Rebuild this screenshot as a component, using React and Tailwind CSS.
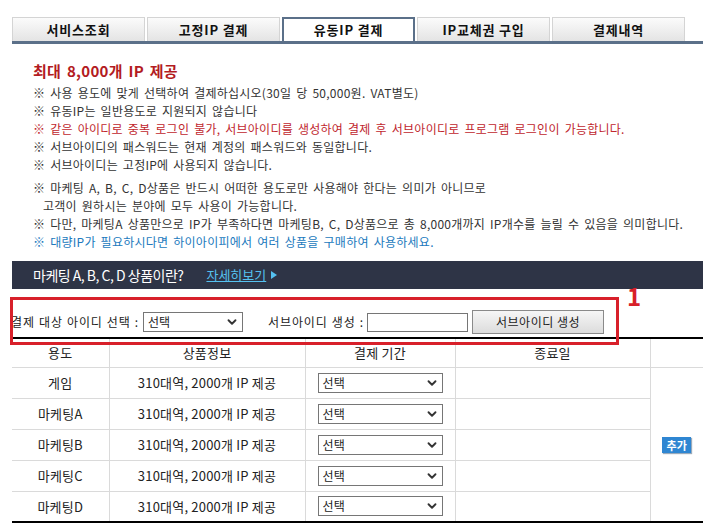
import { ChevronDown } from "lucide-react";

const tabs = ["서비스조회", "고정IP 결제", "유동IP 결제", "IP교체권 구입", "결제내역"];

const rows = ["게임", "마케팅A", "마케팅B", "마케팅C", "마케팅D"];

// Fake select box (native selects render differently per browser)
const SelectBox = ({ width }) => (
  <div
    className={`flex h-[20px] items-center justify-between border border-[#767676] bg-white pl-[4px] pr-[3px] text-[12px] text-[#222] ${width}`}
  >
    <span>선택</span>
    <ChevronDown size={14} strokeWidth={3.2} className="text-[#333]" />
  </div>
);

const Notice = ({ children, color = "text-[#333]", indent = false }) => (
  <p className={`h-[18px] leading-[18px] ${color} ${indent ? "pl-[10px]" : ""}`}>{children}</p>
);

export default function App() {
  return (
    <div className="relative h-[530px] w-[703px] overflow-hidden bg-white font-['Noto_Sans_CJK_KR',sans-serif] text-[12px] text-[#333]">
      {/* top tabs */}
      <div className="pl-[12px] pt-[17px]">
        <div className="flex gap-[2px] border-b-[3px] border-[#5b7089]">
          {tabs.map((tab, i) =>
            i === 2 ? (
              <div
                key={tab}
                className="flex h-[24px] w-[133px] items-center justify-center border-x-2 border-t-2 border-[#5b7089] bg-white text-[13px] font-bold tracking-[0.8px] text-[#111]"
              >
                {tab}
              </div>
            ) : (
              <div
                key={tab}
                className="flex h-[24px] w-[133px] items-center justify-center border border-b-0 border-[#d4d4d4] bg-gradient-to-b from-[#fbfbfb] to-[#e4e4e4] text-[13px] font-bold tracking-[0.8px] text-[#111]"
              >
                {tab}
              </div>
            )
          )}
        </div>
      </div>

      {/* notices */}
      <div className="pl-[33px] pt-[17px] tracking-[0.25px] [word-spacing:2px]">
        <h2 className="h-[20px] text-[15px] font-bold leading-[20px] tracking-[0.3px] text-[#b31b22]">최대 8,000개 IP 제공</h2>
        <div className="mt-[3px]">
          <Notice>※ 사용 용도에 맞게 선택하여 결제하십시오(30일 당 50,000원. VAT별도)</Notice>
          <Notice>※ 유동IP는 일반용도로 지원되지 않습니다</Notice>
          <Notice color="text-[#c0262d]">
            ※ 같은 아이디로 중복 로그인 불가, 서브아이디를 생성하여 결제 후 서브아이디로 프로그램 로그인이 가능합니다.
          </Notice>
          <Notice>※ 서브아이디의 패스워드는 현재 계정의 패스워드와 동일합니다.</Notice>
          <Notice>※ 서브아이디는 고정IP에 사용되지 않습니다.</Notice>
        </div>
        <div className="mt-[5px]">
          <Notice>※ 마케팅 A, B, C, D상품은 반드시 어떠한 용도로만 사용해야 한다는 의미가 아니므로</Notice>
          <Notice indent>고객이 원하시는 분야에 모두 사용이 가능합니다.</Notice>
          <Notice>
            ※ 다만, 마케팅A 상품만으로 IP가 부족하다면 마케팅B, C, D상품으로 총 8,000개까지 IP개수를 늘릴 수 있음을 의미합니다.
          </Notice>
          <Notice color="text-[#2179bd]">※ 대량IP가 필요하시다면 하이아이피에서 여러 상품을 구매하여 사용하세요.</Notice>
        </div>
      </div>

      {/* banner */}
      <div className="ml-[12px] mt-[10px] flex h-[28px] items-center bg-[#2e3446] pl-[21px]">
        <span className="text-[14px] tracking-[-0.5px] text-white">마케팅 A, B, C, D 상품이란?</span>
        <span className="ml-[23px] text-[13px] text-[#55c1f0] underline">자세히보기</span>
        <svg width="6" height="8" viewBox="0 0 6 8" className="ml-[5px]">
          <path d="M0 0 L6 4 L0 8 Z" fill="#55c1f0" />
        </svg>
      </div>

      {/* sub id form */}
      <div className="mt-[20px] flex h-[26px] items-center pl-[11px] text-[12px] text-[#222]">
        <span className="w-[132px] tracking-[0.9px] [word-spacing:0.5px]">결제 대상 아이디 선택 :</span>
        <SelectBox width="w-[100px]" />
        <span className="ml-[25px] w-[99px] tracking-[0.9px] [word-spacing:0.5px]">서브아이디 생성 :</span>
        <div className="h-[19px] w-[101px] border border-[#767676] bg-white" />
        <button className="ml-[4px] h-[24px] w-[132px] border border-[#8a8a8a] bg-gradient-to-b from-[#f6f6f6] to-[#dcdcdc] text-[12px] tracking-[0.5px] text-[#222]">
          서브아이디 생성
        </button>
      </div>

      {/* product table */}
      <table className="ml-[12px] mt-[2px] w-[691px] table-fixed border-collapse border-y-2 border-black text-[13px] tracking-[0.2px] text-[#222]">
        <colgroup>
          <col className="w-[97px]" />
          <col className="w-[196px]" />
          <col className="w-[150px]" />
          <col className="w-[195px]" />
          <col className="w-[53px]" />
        </colgroup>
        <thead>
          <tr className="h-[29px] border-b border-[#dadada]">
            <th className="font-normal">용도</th>
            <th className="border-l border-[#dadada] font-normal">상품정보</th>
            <th className="border-l border-[#dadada] font-normal">결제 기간</th>
            <th className="border-l border-[#dadada] font-normal">종료일</th>
            <th className="border-l border-[#dadada]"></th>
          </tr>
        </thead>
        <tbody>
          {rows.map((name, i) => (
            <tr key={name} className={`h-[31px] ${i < rows.length - 1 ? "border-b border-[#dadada]" : ""}`}>
              <td className="text-center">{name}</td>
              <td className="border-l border-[#dadada] text-center">310대역, 2000개 IP 제공</td>
              <td className="border-l border-[#dadada] pl-[12px]">
                <SelectBox width="w-[125px]" />
              </td>
              <td className="border-l border-[#dadada]"></td>
              {i === 0 && (
                <td rowSpan={5} className="border-l border-[#dadada] text-center align-middle">
                  <span className="inline-block h-[16px] w-[29px] bg-[#2f86d2] text-[11px] font-bold leading-[16px] text-white shadow-[1px_1px_1px_#9ab]">
                    추가
                  </span>
                </td>
              )}
            </tr>
          ))}
        </tbody>
      </table>

      {/* annotation overlay */}
      <div className="pointer-events-none absolute left-[10px] top-[297px] h-[48px] w-[609px] border-[3px] border-[#d8202a]" />
      <div className="pointer-events-none absolute left-[627px] top-[281px] text-[24px] font-bold leading-[30px] text-[#d8202a]">
        1
      </div>
    </div>
  );
}
